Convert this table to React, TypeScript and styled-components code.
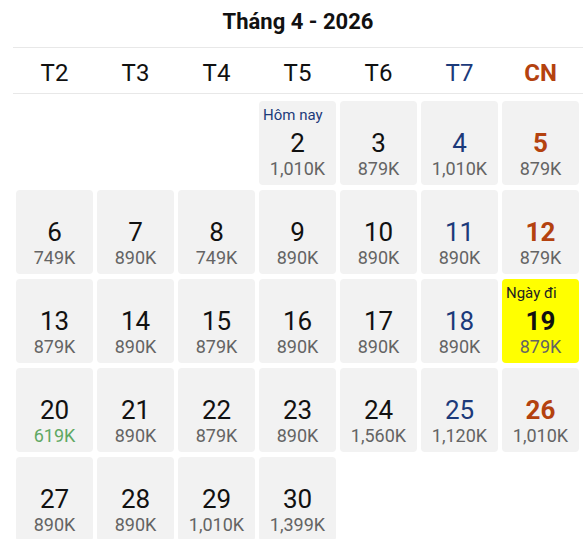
import React from "react"
import styled, { createGlobalStyle } from "styled-components"

type Tone = "normal" | "sat" | "sun"

interface Day {
  day: number
  price: string
  cheap?: boolean
  today?: boolean
  selected?: boolean
}

const WEEKDAYS: { label: string; tone: Tone }[] = [
  { label: "T2", tone: "normal" },
  { label: "T3", tone: "normal" },
  { label: "T4", tone: "normal" },
  { label: "T5", tone: "normal" },
  { label: "T6", tone: "normal" },
  { label: "T7", tone: "sat" },
  { label: "CN", tone: "sun" },
]

const LEADING_BLANKS = 3

const DAYS: Day[] = [
  { day: 2, price: "1,010K", today: true },
  { day: 3, price: "879K" },
  { day: 4, price: "1,010K" },
  { day: 5, price: "879K" },
  { day: 6, price: "749K" },
  { day: 7, price: "890K" },
  { day: 8, price: "749K" },
  { day: 9, price: "890K" },
  { day: 10, price: "890K" },
  { day: 11, price: "890K" },
  { day: 12, price: "879K" },
  { day: 13, price: "879K" },
  { day: 14, price: "890K" },
  { day: 15, price: "879K" },
  { day: 16, price: "890K" },
  { day: 17, price: "890K" },
  { day: 18, price: "890K" },
  { day: 19, price: "879K", selected: true },
  { day: 20, price: "619K", cheap: true },
  { day: 21, price: "890K" },
  { day: 22, price: "879K" },
  { day: 23, price: "890K" },
  { day: 24, price: "1,560K" },
  { day: 25, price: "1,120K" },
  { day: 26, price: "1,010K" },
  { day: 27, price: "890K" },
  { day: 28, price: "890K" },
  { day: 29, price: "1,010K" },
  { day: 30, price: "1,399K" },
]

const toneColor = (tone: Tone) =>
  tone === "sat" ? "#1c3a7a" : tone === "sun" ? "#b4420f" : "#111"

const GlobalStyle = createGlobalStyle`
  body {
    margin: 0;
    background: #fff;
    font-family: Roboto, "Noto Sans", Arial, sans-serif;
  }
`

const Page = styled.div`
  width: 583px;
  height: 539px;
  overflow: hidden;
  padding-left: 13px;
  box-sizing: border-box;
`

const Title = styled.h2`
  margin: 0;
  padding: 9px 0 12px 0;
  font-size: 22px;
  line-height: 26px;
  font-weight: 700;
  color: #111;
  text-align: center;
  border-bottom: 1px solid #e8e8e8;
`

const Columns = styled.div`
  display: grid;
  grid-template-columns: repeat(7, 77px);
  column-gap: 4px;
  padding: 0 4px 0 3px;
`

const WeekRow = styled(Columns)`
  padding-top: 11px;
  padding-bottom: 6px;
  border-bottom: 1px solid #e8e8e8;
`

const WeekLabel = styled.div<{ $tone: Tone }>`
  text-align: center;
  font-size: 24px;
  line-height: 28px;
  color: ${({ $tone }) => toneColor($tone)};
  font-weight: ${({ $tone }) => ($tone === "sun" ? 700 : 400)};
`

const DayGrid = styled(Columns)`
  margin-top: 7px;
  row-gap: 5px;
  grid-auto-rows: 84px;
`

const Cell = styled.div<{ $selected?: boolean }>`
  position: relative;
  border-radius: 4px;
  background: ${({ $selected }) => ($selected ? "#ffff00" : "#f2f2f2")};
  display: flex;
  flex-direction: column;
  align-items: center;
  padding-top: 27px;
  box-sizing: border-box;
`

const Tag = styled.span<{ $today?: boolean }>`
  position: absolute;
  top: 5px;
  left: 4px;
  font-size: 15px;
  line-height: 18px;
  color: ${({ $today }) => ($today ? "#1c3a7a" : "#222")};
`

const DayNumber = styled.span<{ $tone: Tone; $bold?: boolean }>`
  font-size: 26px;
  line-height: 30px;
  color: ${({ $tone }) => toneColor($tone)};
  font-weight: ${({ $tone, $bold }) => ($tone === "sun" || $bold ? 700 : 400)};
`

const Price = styled.span<{ $cheap?: boolean }>`
  margin-top: 1px;
  font-size: 18px;
  line-height: 20px;
  color: ${({ $cheap }) => ($cheap ? "#5fa863" : "#646464")};
`

export default function App() {
  return (
    <Page>
      <GlobalStyle />
      <Title>Tháng 4 - 2026</Title>
      <WeekRow>
        {WEEKDAYS.map((w) => (
          <WeekLabel key={w.label} $tone={w.tone}>
            {w.label}
          </WeekLabel>
        ))}
      </WeekRow>
      <DayGrid>
        {Array.from({ length: LEADING_BLANKS }).map((_, i) => (
          <div key={`blank-${i}`} />
        ))}
        {DAYS.map((d, i) => {
          const tone = WEEKDAYS[(i + LEADING_BLANKS) % 7].tone
          return (
            <Cell key={d.day} $selected={d.selected}>
              {d.today && <Tag $today>Hôm nay</Tag>}
              {d.selected && <Tag>Ngày đi</Tag>}
              <DayNumber $tone={d.selected ? "normal" : tone} $bold={d.selected}>
                {d.day}
              </DayNumber>
              <Price $cheap={d.cheap}>{d.price}</Price>
            </Cell>
          )
        })}
      </DayGrid>
    </Page>
  )
}
